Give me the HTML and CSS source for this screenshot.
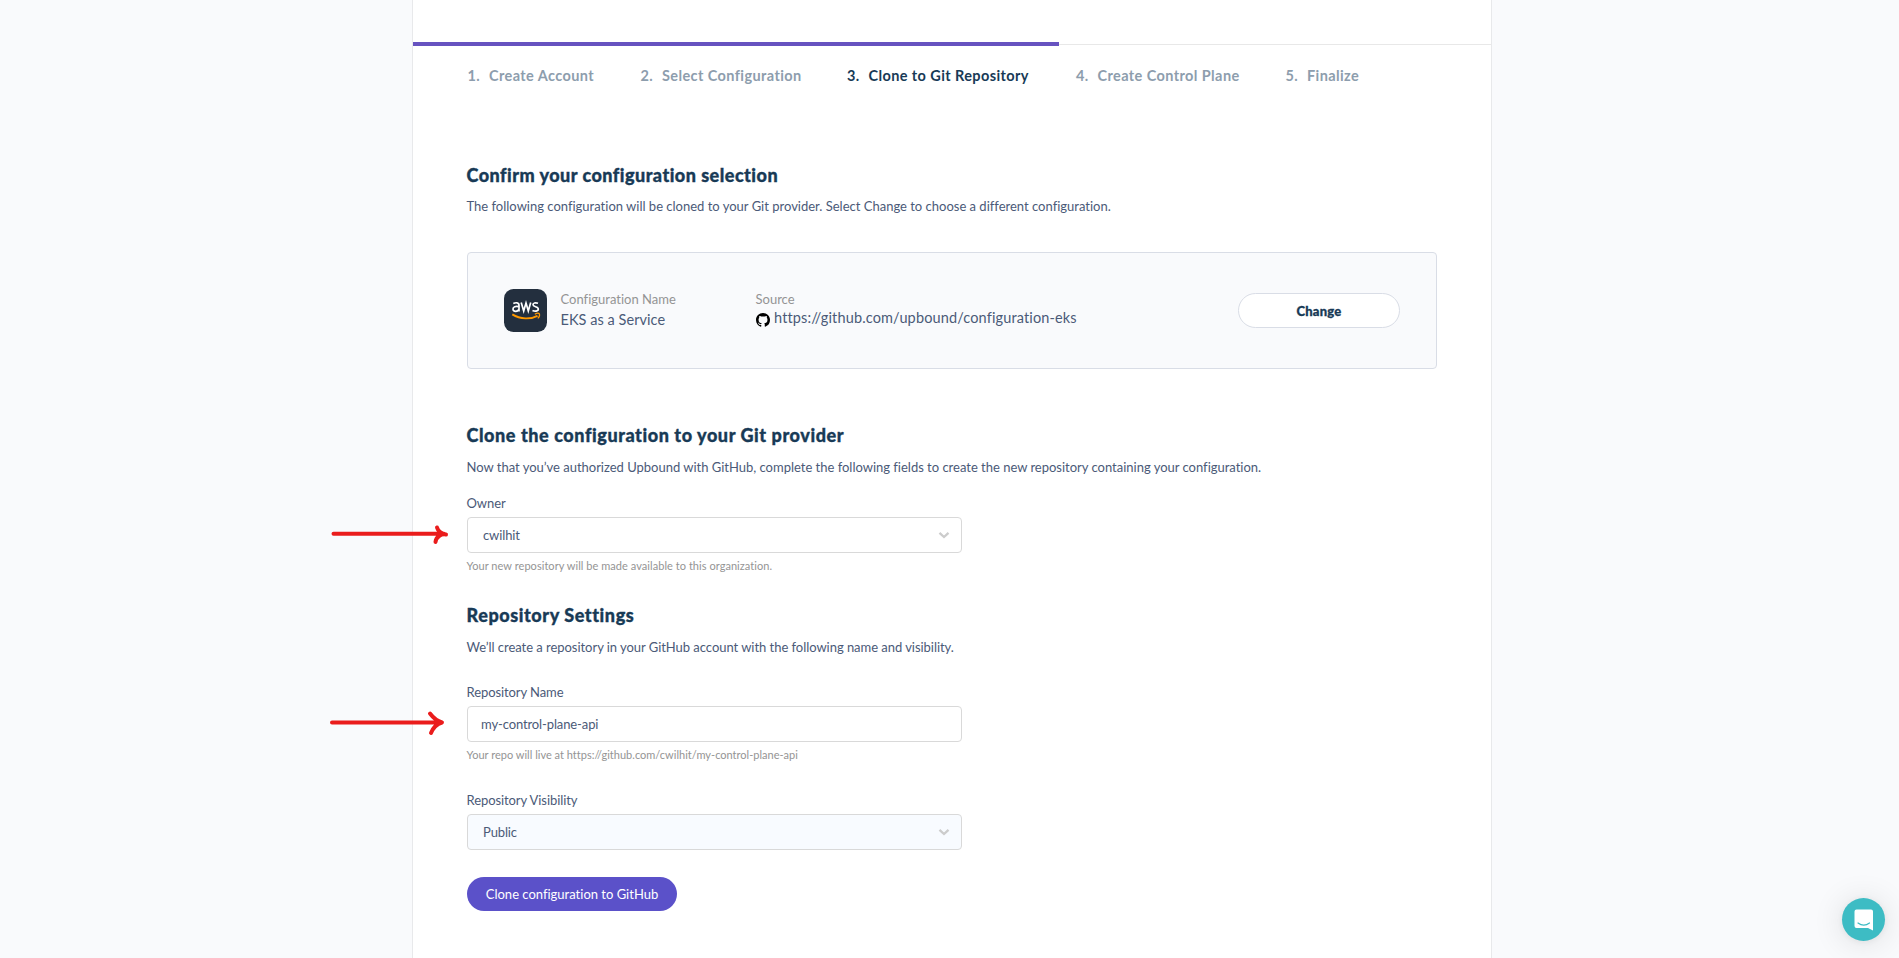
FILE: index.html
```html
<!DOCTYPE html>
<html lang="en">
<head>
<meta charset="utf-8">
<title>Clone to Git Repository</title>
<link rel="stylesheet" href="styles.css">
</head>
<body>
<main class="panel">
  <div class="progress"><div class="progress-bar"></div></div>
  <nav class="steps">
    <div class="step s1"><span class="num">1.</span><span class="name">Create Account</span></div>
    <div class="step s2"><span class="num">2.</span><span class="name">Select Configuration</span></div>
    <div class="step s3 current"><span class="num">3.</span><span class="name">Clone to Git Repository</span></div>
    <div class="step s4"><span class="num">4.</span><span class="name">Create Control Plane</span></div>
    <div class="step s5"><span class="num">5.</span><span class="name">Finalize</span></div>
  </nav>
  <section class="confirm">
    <h2 class="title">Confirm your configuration selection</h2>
    <p class="desc">The following configuration will be cloned to your Git provider. Select Change to choose a different configuration.</p>
    <div class="card">
      <svg class="aws" viewBox="0 0 43 43" width="43" height="43">
        <rect width="43" height="43" rx="9.5" fill="#232f3e"/>
        <g fill="none" stroke="#fff" stroke-width="1.7">
          <path d="M9.3 14.6C11.5 13.3 15 13.2 15 16.3V22.6M15 17.7C11.500 17 9 17.600 9 20C9 23.200 14 23 15 20"/>
          <path d="M17.200 13.500L19.700 21.900L22 14L24.300 21.900L26.700 13.500"/>
          <path d="M34 14.300C31.500 13.400 28.900 13.900 29 15.700C29.100 18.200 34.300 17.200 34.300 20C34.300 22.600 30.500 22.400 28.500 21.400"/>
        </g>
        <path d="M8.300 25.400C16.500 30.500 26.500 30.500 33.500 26.800" fill="none" stroke="#f90" stroke-width="1.900"/>
        <path d="M30.800 25.300C32.500 24.300 34.800 24.200 35.400 24.900C35.800 26 35 28.300 33.800 29.400" fill="none" stroke="#f90" stroke-width="1.200"/>
      </svg>
      <div class="info info-name"><span class="label">Configuration Name</span><span class="value">EKS as a Service</span></div>
      <div class="info info-source"><span class="label">Source</span>
        <span class="value source"><svg class="gh" viewBox="0 0 16 16" width="14" height="14"><path d="M8 0C3.580 0 0 3.580 0 8c0 3.540 2.290 6.530 5.470 7.590.4.070.55-.17.55-.38 0-.19-.01-.82-.01-1.490-2.010.37-2.530-.49-2.690-.94-.09-.23-.48-.94-.82-1.130-.28-.15-.68-.52-.01-.53.63-.01 1.080.58 1.230.82.72 1.210 1.870.87 2.330.66.07-.52.28-.87.51-1.070-1.780-.2-3.640-.89-3.640-3.950 0-.87.31-1.590.82-2.150-.08-.2-.36-1.020.08-2.120 0 0 .67-.21 2.200.82.64-.18 1.320-.27 2-.27s1.360.09 2 .27c1.530-1.040 2.200-.82 2.200-.82.44 1.100.16 1.920.08 2.120.51.56.82 1.270.82 2.150 0 3.070-1.870 3.750-3.650 3.950.29.25.54.73.54 1.480 0 1.070-.01 1.930-.01 2.200 0 .21.15.46.55.38A8.010 8.010 0 0 0 16 8c0-4.420-3.580-8-8-8z"/></svg><span>https://github.com/upbound/configuration-eks</span></span></div>
      <button class="change">Change</button>
    </div>
  </section>
  <section class="clone">
    <h2 class="title">Clone the configuration to your Git provider</h2>
    <p class="desc">Now that you’ve authorized Upbound with GitHub, complete the following fields to create the new repository containing your configuration.</p>
    <div class="field owner">
      <span class="field-label">Owner</span>
      <div class="control select"><span>cwilhit</span><svg class="chev" viewBox="0 0 12 8" width="12" height="8"><path d="M1.500 1.800L6 6L10.500 1.800"/></svg></div>
      <span class="help">Your new repository will be made available to this organization.</span>
    </div>
  </section>
  <section class="settings">
    <h2 class="title">Repository Settings</h2>
    <p class="desc tight">We’ll create a repository in your GitHub account with the following name and visibility.</p>
    <div class="field repo">
      <span class="field-label">Repository Name</span>
      <div class="control input"><span>my-control-plane-api</span></div>
      <span class="help url">Your repo will live at https://github.com/cwilhit/my-control-plane-api</span>
    </div>
    <div class="field visibility">
      <span class="field-label">Repository Visibility</span>
      <div class="control select tinted"><span>Public</span><svg class="chev" viewBox="0 0 12 8" width="12" height="8"><path d="M1.500 1.800L6 6L10.500 1.800"/></svg></div>
    </div>
    <button class="submit">Clone configuration to GitHub</button>
  </section>
</main>
<svg class="arrow arrow-owner" viewBox="0 0 120 24" width="120" height="24"><path d="M3.500 11.700H114M107 5.500C108 9 111 11.500 116 12.500C111 11.500 106 15 105.500 20"/></svg>
<svg class="arrow arrow-repo" viewBox="0 0 120 28" width="120" height="28"><path d="M2 14.500H111M100 5.500C103 9.500 107 13 112 14.500C107 16 103 20 101 25"/></svg>
<div class="chat"><svg viewBox="0 0 20 22" width="20" height="22"><path d="M2.500 0.500H17A2 2 0 0 1 19 2.500V21.500L14 19H2.500A2 2 0 0 1 .5 17V2.500A2 2 0 0 1 2.500 .5Z" fill="#fff"/><path d="M4 14C7.500 16.700 12 16.700 15.500 14" fill="none" stroke="#3dbcc4" stroke-width="1.200" stroke-linecap="round"/></svg></div>
</body>
</html>
```
FILE: styles.css
```css
* { box-sizing: border-box; }
html, body { height: 958px; overflow: hidden; }
body { margin: 0; background: #f9fafc; font-family: Lato, "Liberation Sans", sans-serif; color: #4b5a78; font-size: 13px; line-height: 20px; font-variant-ligatures: none; }
h2, p { margin: 0; }
button { font: inherit; padding: 0; cursor: pointer; }
.panel { width: 1080px; height: 958px; margin-left: 412px; background: #fff; border: solid #e8e9eb; border-width: 0 1px; padding-top: 42px; }
.progress { height: 4px; background: linear-gradient(#e8e8e8, #e8e8e8) 0 2px / 100% 1px no-repeat; }
.progress-bar { width: 646px; height: 4px; background: #6753c0; }
.steps { display: flex; padding: 20px 0 0 54.5px; color: #8d9dad; font-size: 14.5px; font-weight: 700; letter-spacing: .4px; }
.step { display: flex; white-space: nowrap; }
.step .num { width: 21.5px; }
.s1 { width: 173px; } .s2 { width: 206.5px; } .s3 { width: 229px; } .s4 { width: 209.5px; }
.current { color: #183a56; }
section { padding: 0 54px; }
.title { margin-left: -.5px; color: #183a56; font-size: 18px; line-height: 24px; font-weight: 900; white-space: nowrap; letter-spacing: .48px; -webkit-text-stroke: .35px #183a56; }
.clone .title, .settings .title { letter-spacing: .58px; }
.desc { margin: 10px 0 0 -.5px; white-space: nowrap; letter-spacing: 0; }
.clone .desc { letter-spacing: -.01px; }
.desc.tight { letter-spacing: -.04px; }
.confirm { margin-top: 77px; }
.confirm .desc { margin-top: 9px; }
.card { display: flex; height: 117px; margin-top: 36px; border: 1px solid #d9dde6; border-radius: 4px; background: #f9fafc; padding: 36px; }
.aws, .gh { display: block; flex: none; }
.info { display: flex; flex-direction: column; white-space: nowrap; }
.info-name { margin-left: 13.5px; width: 195px; }
.label { color: #949494; line-height: 20px; }
.value { font-size: 14.5px; line-height: 22px; letter-spacing: .05px; }
.source { display: flex; gap: 4.5px; line-height: 18px; letter-spacing: .14px; }
.gh { margin-top: 3.5px; }
.change { width: 162px; height: 35px; margin: 4px 0 0 auto; border: 1px solid #d9dde6; border-radius: 18px; background: #fff; color: #183a56; font-weight: 900; letter-spacing: .2px; -webkit-text-stroke: .3px #183a56; }
.clone { margin-top: 54px; }
.field { width: 495px; display: flex; flex-direction: column; white-space: nowrap; }
.field-label { margin-left: -.5px; letter-spacing: -.08px; }
.owner { margin-top: 16px; }
.control { display: flex; align-items: center; justify-content: space-between; height: 36px; border: 1px solid #d9d9d9; border-radius: 4px; padding: 0 11px 1px 15px; margin-top: 4px; letter-spacing: -.12px; }
.input { padding-left: 13px; }
.tinted { background: #f8fbff; }
.chev { fill: none; stroke: #ccc; stroke-width: 2.3; position: relative; top: .5px; }
.help { font-size: 11px; color: #949494; line-height: 16px; margin: 5px 0 0 -.5px; letter-spacing: .05px; }
.help.url { letter-spacing: .01px; }
.settings { margin-top: 29px; }
.repo { margin-top: 25px; }
.visibility { margin-top: 27px; }
.submit { width: 210px; height: 34px; margin-top: 27px; border: 0; border-radius: 17px; background: #5b51c9; color: #fff; display: block; }
.arrow { position: absolute; fill: none; stroke: #ea1c1c; stroke-width: 4; stroke-linecap: round; stroke-linejoin: round; }
.arrow-owner { left: 330px; top: 522px; }
.arrow-repo { left: 330px; top: 708px; }
.chat { position: absolute; left: 1842px; top: 898px; width: 43px; height: 43px; border-radius: 50%; background: #3dbcc4; display: flex; align-items: center; justify-content: center; box-shadow: 0 1px 6px rgba(0,0,0,.06), 0 2px 32px rgba(0,0,0,.12); }
```
